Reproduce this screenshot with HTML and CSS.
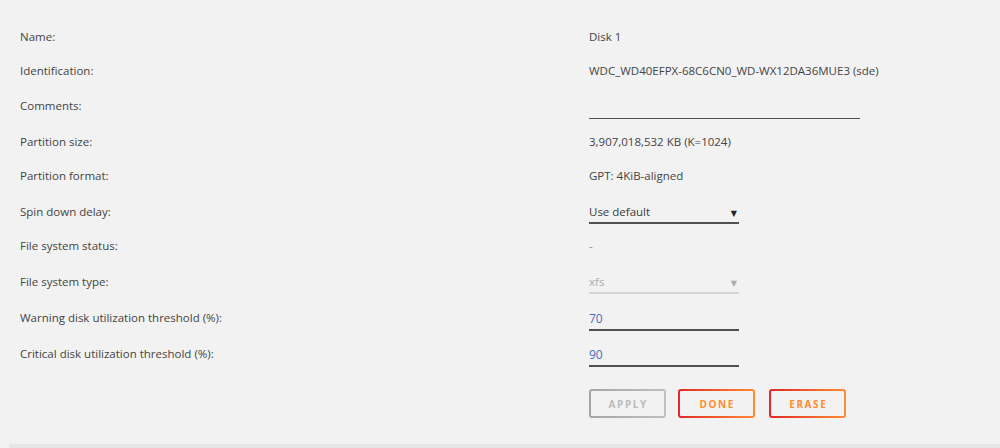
FILE: index.html
```html
<!DOCTYPE html>
<html>
<head>
<meta charset="utf-8">
<link rel="stylesheet" href="styles.css">
</head>
<body>
<div class="page">
  <div class="form">
    <div class="row"><div class="label">Name:</div><div class="value">Disk 1</div></div>
    <div class="row"><div class="label">Identification:</div><div class="value">WDC_WD40EFPX-68C6CN0_WD-WX12DA36MUE3 (sde)</div></div>
    <div class="row row-input row-text"><div class="label">Comments:</div><div class="value"><div class="field field-wide"></div></div></div>
    <div class="row"><div class="label">Partition size:</div><div class="value">3,907,018,532 KB (K=1024)</div></div>
    <div class="row"><div class="label">Partition format:</div><div class="value">GPT: 4KiB-aligned</div></div>
    <div class="row row-input"><div class="label">Spin down delay:</div><div class="value"><div class="field select"><span>Use default</span><span class="caret">&#9660;</span></div></div></div>
    <div class="row"><div class="label">File system status:</div><div class="value muted">-</div></div>
    <div class="row row-input"><div class="label">File system type:</div><div class="value"><div class="field select disabled"><span>xfs</span><span class="caret">&#9660;</span></div></div></div>
    <div class="row row-input"><div class="label">Warning disk utilization threshold (%):</div><div class="value"><div class="field num">70</div></div></div>
    <div class="row row-input"><div class="label">Critical disk utilization threshold (%):</div><div class="value"><div class="field num">90</div></div></div>
    <div class="row row-buttons"><div class="label"></div><div class="value buttons">
      <button class="btn btn-disabled">Apply</button>
      <button class="btn">Done</button>
      <button class="btn">Erase</button>
    </div></div>
  </div>
  <div class="footer-bar"></div>
</div>
</body>
</html>
```

FILE: styles.css
```css
* { box-sizing: border-box; }
html, body { margin: 0; padding: 0; background: #f2f2f2; }
body {
  font-family: "Open Sans", "DejaVu Sans", sans-serif;
  font-size: 11.5px;
  color: #444;
  width: 1000px;
  height: 448px;
  overflow: hidden;
}
.page { display: flex; flex-direction: column; height: 448px; }
.form { padding: 19px 0 0 20px; flex: 1; }
.row { display: flex; height: 34px; align-items: center; }
.row-input { height: 36px; align-items: flex-start; padding-top: 12px; }
.row-input.row-text { height: 37px; padding-top: 11px; }
.label { width: 569px; flex: none; }
.value { flex: 1; }
.muted { color: #888; }
.field {
  height: 20px;
  border-bottom: 2px solid #515151;
  display: flex;
  align-items: flex-start;
  justify-content: space-between;
}
.field-wide { width: 271px; margin-top: 4px; height: 17px; border-bottom-width: 1.5px; }
.select { width: 150px; color: #3a3a3a; }
.caret { font-size: 8px; color: #222; padding-right: 2px; padding-top: 3px; }
.select.disabled { color: #aaa; border-bottom-color: #d6d6d6; }
.select.disabled .caret { color: #aaa; }
.num { width: 150px; height: 21px; color: #486dba; font-size: 12px; }
.row-buttons { height: auto; padding-top: 19px; }
.buttons { display: flex; gap: 12px; }
.btn {
  width: 77px;
  height: 29px;
  font-family: "Open Sans", "DejaVu Sans", sans-serif;
  font-size: 10px;
  font-weight: bold;
  letter-spacing: 1.6px;
  text-transform: uppercase;
  color: #ff8c2f;
  background:
    linear-gradient(#f2f2f2, #f2f2f2) padding-box,
    linear-gradient(90deg, #e22828, #ff8c2f) border-box;
  border: 2px solid transparent;
  border-radius: 3px;
  padding: 0 0 0 1.6px;
}
.btn + .btn + .btn { margin-left: 2px; }
.btn-disabled {
  color: #bbb;
  background:
    linear-gradient(#f2f2f2, #f2f2f2) padding-box,
    linear-gradient(90deg, #a5a5a5, #c0c0c0) border-box;
}
.footer-bar { height: 4px; margin-left: 9px; background: #e6e6e6; }
```
